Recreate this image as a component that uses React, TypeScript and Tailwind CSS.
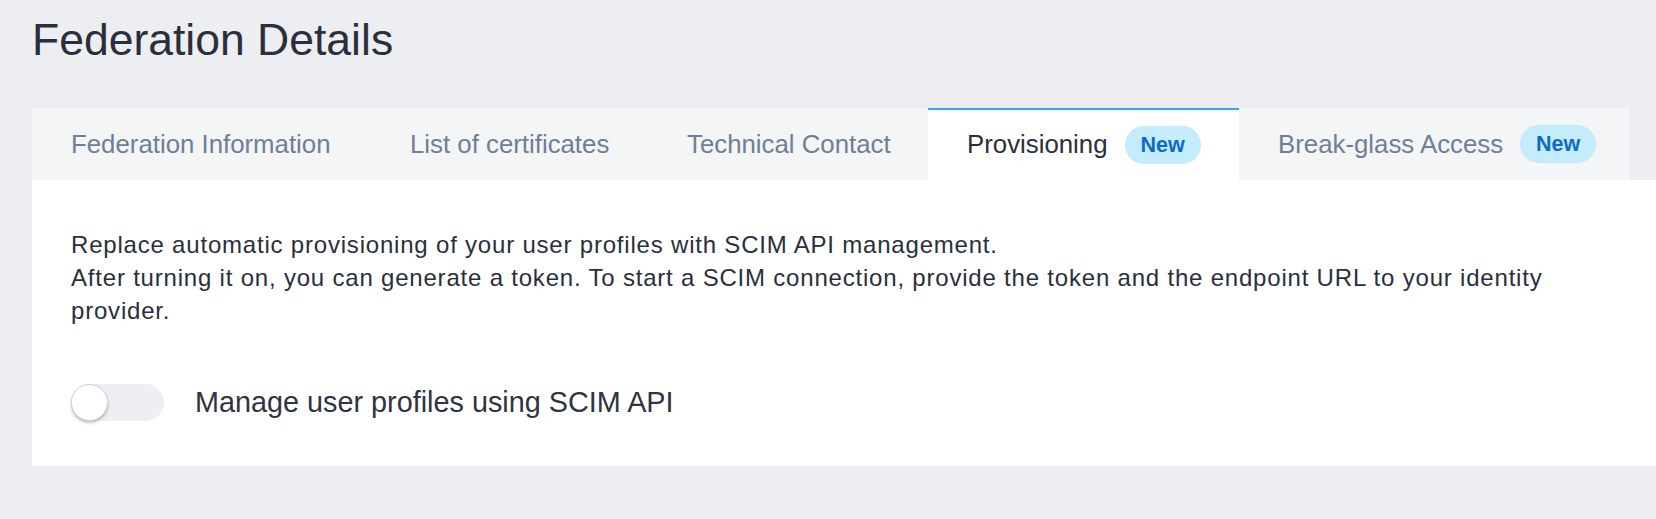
import { useState } from 'react';

type Tab = {
  label: string;
  width: string;
  badge?: boolean;
};

const tabs: Tab[] = [
  { label: 'Federation Information', width: 'w-[339px]' },
  { label: 'List of certificates', width: 'w-[277px]' },
  { label: 'Technical Contact', width: 'w-[280px]' },
  { label: 'Provisioning', width: 'w-[311px]', badge: true },
  { label: 'Break-glass Access', width: 'w-[391px]', badge: true },
];

function NewBadge() {
  return (
    <span className="ml-[17px] inline-flex h-[38px] items-center rounded-full bg-[#c4ecfd] px-[16px] text-[21.5px] font-bold text-[#0b6bcb]">
      New
    </span>
  );
}

function Toggle({ on, onChange }: { on: boolean; onChange: (v: boolean) => void }) {
  return (
    <button
      type="button"
      role="switch"
      aria-checked={on}
      onClick={() => onChange(!on)}
      className={
        'relative h-[37px] w-[93px] shrink-0 rounded-full ' +
        (on ? 'bg-[#31a8f5]' : 'bg-[#eeeff3]')
      }
    >
      <span
        className={
          'absolute top-0 left-0 h-[37px] w-[37px] rounded-full border border-[#d4d5da] bg-white shadow-[0_2px_3px_rgba(0,0,0,0.25)] ' +
          (on ? 'translate-x-[56px]' : '')
        }
      />
    </button>
  );
}

export default function App() {
  const [active, setActive] = useState(3);
  const [scim, setScim] = useState(false);

  return (
    <div
      className="min-h-screen overflow-hidden bg-[#edeef2] pl-[32px]"
      style={{ fontFamily: '"Liberation Sans", Arial, sans-serif' }}
    >
      <h1 className="pt-[18px] text-[44.5px] leading-[44px] font-normal text-[#2a2f3b]">
        Federation Details
      </h1>

      <div className="mt-[46px] flex">
        <div className="flex h-[72px] bg-[#f4f5f7]">
          {tabs.map((t, i) => {
            const isActive = i === active;
            return (
              <button
                key={t.label}
                type="button"
                onClick={() => setActive(i)}
                className={
                  'flex h-full items-center pl-[39px] text-left text-[25.8px] whitespace-nowrap ' +
                  t.width +
                  ' ' +
                  (isActive
                    ? 'border-t-2 border-[#31a8f5] bg-white text-[#2a2f3b]'
                    : 'text-[#6e7f96]')
                }
              >
                <span className={isActive ? 'pb-[2px]' : ''}>{t.label}</span>
                {t.badge && <NewBadge />}
              </button>
            );
          })}
        </div>
      </div>

      <section className="bg-white pt-[48px] pb-[45px] pl-[39px]">
        <div className="text-[24px] leading-[33px] tracking-[0.8px] text-[#2a2f3b]">
          <p className="whitespace-nowrap">
            Replace automatic provisioning of your user profiles with SCIM API management.
          </p>
          <p className="whitespace-nowrap">
            After turning it on, you can generate a token. To start a SCIM connection, provide the
            token and the endpoint URL to your identity
          </p>
          <p>provider.</p>
        </div>

        <div className="mt-[56px] flex h-[38px] items-center gap-[31px]">
          <Toggle on={scim} onChange={setScim} />
          <span className="text-[28.8px] leading-[38px] text-[#30343f]">
            Manage user profiles using SCIM API
          </span>
        </div>
      </section>
    </div>
  );
}
